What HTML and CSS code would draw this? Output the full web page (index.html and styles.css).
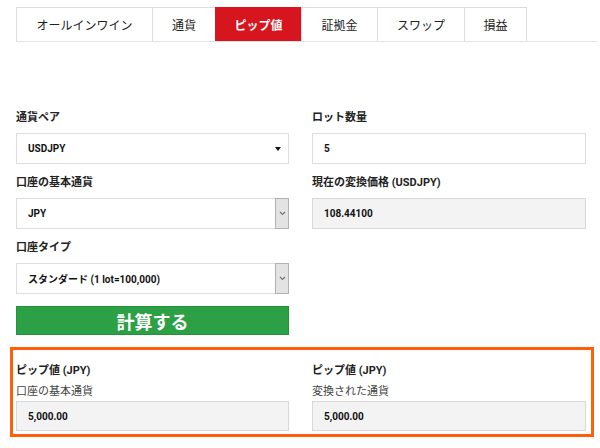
FILE: index.html
```html
<!DOCTYPE html>
<html lang="ja">
<head>
<meta charset="utf-8">
<title>ピップ値</title>
<link rel="stylesheet" href="styles.css">
</head>
<body>
<nav class="tabs">
  <div class="tab tab-all">オールインワイン</div>
  <div class="tab tab-cur">通貨</div>
  <div class="tab tab-pip active">ピップ値</div>
  <div class="tab tab-margin">証拠金</div>
  <div class="tab tab-swap">スワップ</div>
  <div class="tab tab-pl">損益</div>
</nav>

<div class="form">
  <div class="col">
    <div class="label">通貨ペア</div>
    <div class="input select">
      <span>USDJPY</span>
      <span class="caret"></span>
    </div>
    <div class="label">口座の基本通貨</div>
    <div class="input select">
      <span>JPY</span>
      <span class="dropbtn"><svg width="7" height="5" viewBox="0 0 7 5"><path d="M1 1 L3.5 3.5 L6 1" fill="none" stroke="#777" stroke-width="1.2"/></svg></span>
    </div>
    <div class="label">口座タイプ</div>
    <div class="input select">
      <span>スタンダード (1 lot=100,000)</span>
      <span class="dropbtn"><svg width="7" height="5" viewBox="0 0 7 5"><path d="M1 1 L3.5 3.5 L6 1" fill="none" stroke="#777" stroke-width="1.2"/></svg></span>
    </div>
    <div class="button">計算する</div>
  </div>
  <div class="col">
    <div class="label">ロット数量</div>
    <div class="input">5</div>
    <div class="label">現在の変換価格 (USDJPY)</div>
    <div class="input readonly">108.44100</div>
  </div>
</div>

<div class="result">
  <div class="col">
    <div class="label rlabel">ピップ値 (JPY)</div>
    <div class="sublabel">口座の基本通貨</div>
    <div class="input readonly">5,000.00</div>
  </div>
  <div class="col">
    <div class="label rlabel">ピップ値 (JPY)</div>
    <div class="sublabel">変換された通貨</div>
    <div class="input readonly">5,000.00</div>
  </div>
</div>
</body>
</html>
```

FILE: styles.css
```css
html, body {
  margin: 0;
  padding: 0;
  background: #ffffff;
}
body {
  font-family: Roboto, "Noto Sans CJK JP", sans-serif;
  color: #222222;
}

.tabs {
  display: flex;
  margin: 7px 3px 0 16px;
  height: 34px;
  border-bottom: 1px solid #e2e2e2;
}
.tab {
  box-sizing: border-box;
  height: 34px;
  border-top: 1px solid #dcdcdc;
  border-left: 1px solid #dcdcdc;
  display: flex;
  align-items: center;
  justify-content: center;
  font-size: 12px;
  color: #222;
}
.tab-all { width: 136px; }
.tab-cur { width: 63px; }
.tab-pip { width: 86px; }
.tab-margin { width: 76px; }
.tab-swap { width: 87px; }
.tab-pl { width: 63px; border-right: 1px solid #dcdcdc; }
.tab.active {
  background: #d7151f;
  border-color: #d7151f;
  color: #fff;
  font-weight: bold;
}

.form {
  display: grid;
  grid-template-columns: 273px 274px;
  column-gap: 23px;
  padding-left: 16px;
  margin-top: 68px;
}
.col {
  display: flex;
  flex-direction: column;
}
.label {
  font-size: 11px;
  font-weight: bold;
  line-height: 16px;
  height: 16px;
  margin-bottom: 7px;
  color: #222;
}
.input {
  box-sizing: border-box;
  height: 31px;
  border: 1px solid #dddddd;
  background: #fff;
  display: flex;
  align-items: center;
  padding-left: 11px;
  font-size: 10px;
  font-weight: bold;
  color: #111;
  margin-bottom: 11px;
}
.input.readonly {
  background: #f3f3f3;
  border-color: #d8d8d8;
}
.select {
  justify-content: space-between;
  padding-right: 0;
}
.caret {
  width: 0;
  height: 0;
  border-left: 3px solid transparent;
  border-right: 3px solid transparent;
  border-top: 4px solid #111;
  margin-right: 7px;
}
.dropbtn {
  box-sizing: border-box;
  width: 14px;
  height: 31px;
  margin: -1px -1px -1px 0;
  border: 1px solid #b2b2b2;
  background: #e3e3e3;
  display: flex;
  align-items: center;
  justify-content: center;
}
.button {
  box-sizing: border-box;
  height: 29px;
  margin-top: 1px;
  background: #2ca044;
  border: 1px solid #23923b;
  color: #fff;
  font-size: 18px;
  font-weight: bold;
  display: flex;
  align-items: center;
  justify-content: center;
}

.result {
  display: grid;
  grid-template-columns: 273px 274px;
  column-gap: 23px;
  margin: 12px 6px 0 10px;
  border: 3px solid #ff5f0a;
  padding: 13px 5px 3px 3px;
}
.rlabel {
  margin-bottom: 5px;
}
.sublabel {
  font-size: 11px;
  line-height: 16px;
  height: 16px;
  color: #444;
  margin-bottom: 1px;
}
.result .input {
  height: 30px;
  margin-bottom: 0;
}
```
